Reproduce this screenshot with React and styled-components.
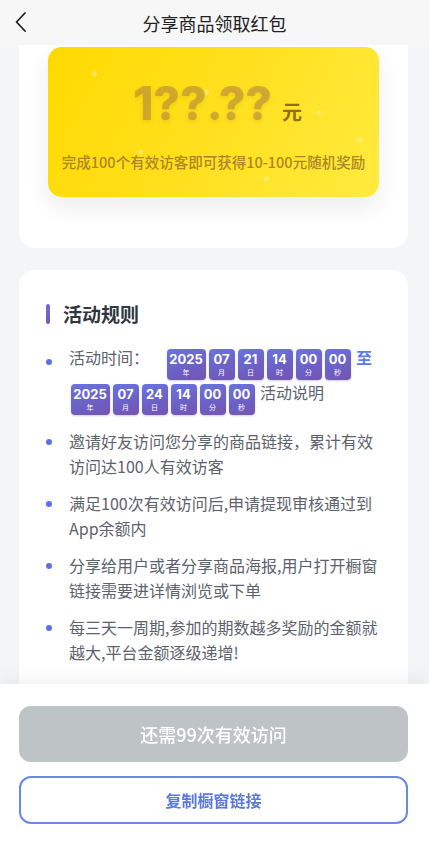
import React from 'react';
import styled, { createGlobalStyle } from 'styled-components';

const GlobalStyle = createGlobalStyle`
    html, body {
        margin: 0;
        padding: 0;
        background: #f4f5f7;
        font-family: "Noto Sans CJK SC", "Noto Sans", sans-serif;
    }
    * { box-sizing: border-box; }
`;

const Page = styled.div`
    width: 100%;
    height: 845px;
    overflow: hidden;
    background: #f4f5f7;
`;

const Header = styled.div`
    height: 45px;
    display: flex;
    align-items: center;
    justify-content: center;
    position: relative;
    background: #f7f7f7;
    z-index: 2;
`;

const BackBtn = styled.div`
    position: absolute;
    left: 10px;
    top: 10px;
    width: 24px;
    height: 24px;
`;

const Title = styled.h1`
    margin: 0;
    font-size: 18px;
    font-weight: 400;
    color: #222;
`;

const Content = styled.div`
    padding: 0 21px 0 19px;
    display: flex;
    flex-direction: column;
    gap: 22px;
`;

const TopCard = styled.div`
    background: #fff;
    border-radius: 0 0 16px 16px;
    padding: 2px 29px 51px 29px;
`;

const Yellow = styled.div`
    height: 150px;
    border-radius: 14px;
    background:
        radial-gradient(circle at 14% 18%, rgba(255,255,255,0.35) 0 2px, transparent 3px),
        radial-gradient(circle at 48% 30%, rgba(255,255,255,0.3) 0 2px, transparent 3px),
        radial-gradient(circle at 82% 44%, rgba(255,255,255,0.3) 0 2px, transparent 3px),
        radial-gradient(circle at 28% 70%, rgba(255,255,255,0.3) 0 2px, transparent 3px),
        radial-gradient(circle at 66% 88%, rgba(255,255,255,0.3) 0 2px, transparent 3px),
        radial-gradient(circle at 94% 62%, rgba(255,255,255,0.3) 0 2px, transparent 3px),
        linear-gradient(120deg, #ffd900 0%, #ffe01e 50%, #ffea3e 100%);
    box-shadow: 0 10px 22px rgba(0, 0, 0, 0.08);
    display: flex;
    flex-direction: column;
    align-items: center;
    padding-top: 30px;
`;

const AmountRow = styled.div`
    display: flex;
    align-items: baseline;
    gap: 10px;
    padding-left: 8px;
`;

const Amount = styled.span`
    font-family: "Inter", "Liberation Sans", sans-serif;
    font-size: 46px;
    font-weight: 800;
    color: rgba(176, 132, 64, 0.55);
    line-height: 52px;
    text-shadow: 0 2px 4px rgba(120, 80, 0, 0.12);
`;

const Unit = styled.span`
    font-size: 20px;
    font-weight: 700;
    color: #7d5c10;
    opacity: 0.85;
`;

const Sub = styled.div`
    margin-top: 22px;
    font-size: 14.5px;
    font-weight: 500;
    color: #ac8624;
`;

const RuleCard = styled.div`
    background: #fff;
    border-radius: 16px;
    padding: 30px 30px 120px 27px;
`;

const RuleTitle = styled.div`
    display: flex;
    align-items: center;
    gap: 13px;
    font-size: 19px;
    font-weight: 700;
    color: #2f3640;
    margin-bottom: 18px;
`;

const TitleBar = styled.span`
    width: 4px;
    height: 20px;
    border-radius: 2px;
    background: linear-gradient(180deg, #6b6fdc, #7a55b4);
`;

const List = styled.ul`
    list-style: none;
    margin: 0;
    padding: 0;
    display: flex;
    flex-direction: column;
    gap: 12px;
`;

const Item = styled.li`
    position: relative;
    padding-left: 23px;
    font-size: 16px;
    line-height: 25px;
    color: #5c626c;
    &::before {
        content: '';
        position: absolute;
        left: 0;
        top: 10px;
        width: 6px;
        height: 6px;
        border-radius: 50%;
        background: #5b72e6;
    }
`;

const TimeItem = styled(Item)`
    line-height: 34px;
    margin-bottom: 2px;
    &::before {
        top: 14px;
    }
`;

const Label = styled.span`
    display: inline-block;
    margin-right: 16px;
    vertical-align: top;
    line-height: 24px;
`;

const Chip = styled.span`
    display: inline-flex;
    flex-direction: column;
    align-items: center;
    justify-content: center;
    width: ${({ $wide }) => ($wide ? '39px' : '26px')};
    height: 31px;
    margin: 0 1.5px;
    vertical-align: middle;
    border-radius: 4px;
    background: linear-gradient(160deg, #6a74de 0%, #6c5fc4 60%, #7654b2 100%);
    box-shadow: 0 1px 2px rgba(80, 60, 160, 0.25);
    color: #fff;
`;

const ChipNum = styled.b`
    font-family: "Inter", "Liberation Sans", sans-serif;
    font-size: 13px;
    line-height: 14px;
    font-weight: 700;
`;

const ChipUnit = styled.span`
    font-size: 7px;
    line-height: 9px;
    margin-top: 2px;
`;

const To = styled.span`
    color: #5b7ce8;
    font-weight: 600;
    margin-left: 4px;
    vertical-align: top;
    line-height: 24px;
`;

const Note = styled.span`
    margin-left: 4px;
    vertical-align: top;
    line-height: 24px;
`;

const Bottom = styled.div`
    position: fixed;
    left: 0;
    right: 0;
    bottom: 0;
    height: 161px;
    background: #fff;
    box-shadow: 0 -6px 16px rgba(0, 0, 0, 0.05);
    padding: 22px 21px 0 19px;
    display: flex;
    flex-direction: column;
    gap: 14px;
    z-index: 3;
`;

const Button = styled.button`
    width: 100%;
    height: ${({ $outline }) => ($outline ? '48px' : '56px')};
    border-radius: 12px;
    border: ${({ $outline }) => ($outline ? '2px solid #6b87ea' : 'none')};
    background: ${({ $outline }) => ($outline ? '#fff' : '#bec3c6')};
    color: ${({ $outline }) => ($outline ? '#5a78e0' : '#fff')};
    font-family: inherit;
    font-size: ${({ $outline }) => ($outline ? '16px' : '18px')};
    font-weight: ${({ $outline }) => ($outline ? 700 : 500)};
    cursor: pointer;
`;

const units = ['年', '月', '日', '时', '分', '秒'];

const DateChips = ({ parts }) =>
    parts.map((p, i) => (
        <Chip key={i} $wide={i === 0}>
            <ChipNum>{p}</ChipNum>
            <ChipUnit>{units[i]}</ChipUnit>
        </Chip>
    ));

const rules = [
    '邀请好友访问您分享的商品链接，累计有效访问达100人有效访客',
    '满足100次有效访问后,申请提现审核通过到App余额内',
    '分享给用户或者分享商品海报,用户打开橱窗链接需要进详情浏览或下单',
    '每三天一周期,参加的期数越多奖励的金额就越大,平台金额逐级递增!',
];

const App = () => {
    return (
        <Page>
            <GlobalStyle />
            <Header>
                <BackBtn>
                    <svg width="24" height="24" viewBox="0 0 24 24" fill="none">
                        <path d="M15 3 L6.5 12 L15 21" stroke="#222" strokeWidth="1.8" strokeLinecap="round" strokeLinejoin="round" />
                    </svg>
                </BackBtn>
                <Title>分享商品领取红包</Title>
            </Header>
            <Content>
                <TopCard>
                    <Yellow>
                        <AmountRow>
                            <Amount>1??.??</Amount>
                            <Unit>元</Unit>
                        </AmountRow>
                        <Sub>完成100个有效访客即可获得10-100元随机奖励</Sub>
                    </Yellow>
                </TopCard>
                <RuleCard>
                    <RuleTitle>
                        <TitleBar />
                        活动规则
                    </RuleTitle>
                    <List>
                        <TimeItem>
                            <Label>活动时间：</Label>
                            <DateChips parts={['2025', '07', '21', '14', '00', '00']} />
                            <To>至</To>
                            <DateChips parts={['2025', '07', '24', '14', '00', '00']} />
                            <Note>活动说明</Note>
                        </TimeItem>
                        {rules.map((r) => (
                            <Item key={r}>{r}</Item>
                        ))}
                    </List>
                </RuleCard>
            </Content>
            <Bottom>
                <Button>还需99次有效访问</Button>
                <Button $outline>复制橱窗链接</Button>
            </Bottom>
        </Page>
    );
};

export default App;
